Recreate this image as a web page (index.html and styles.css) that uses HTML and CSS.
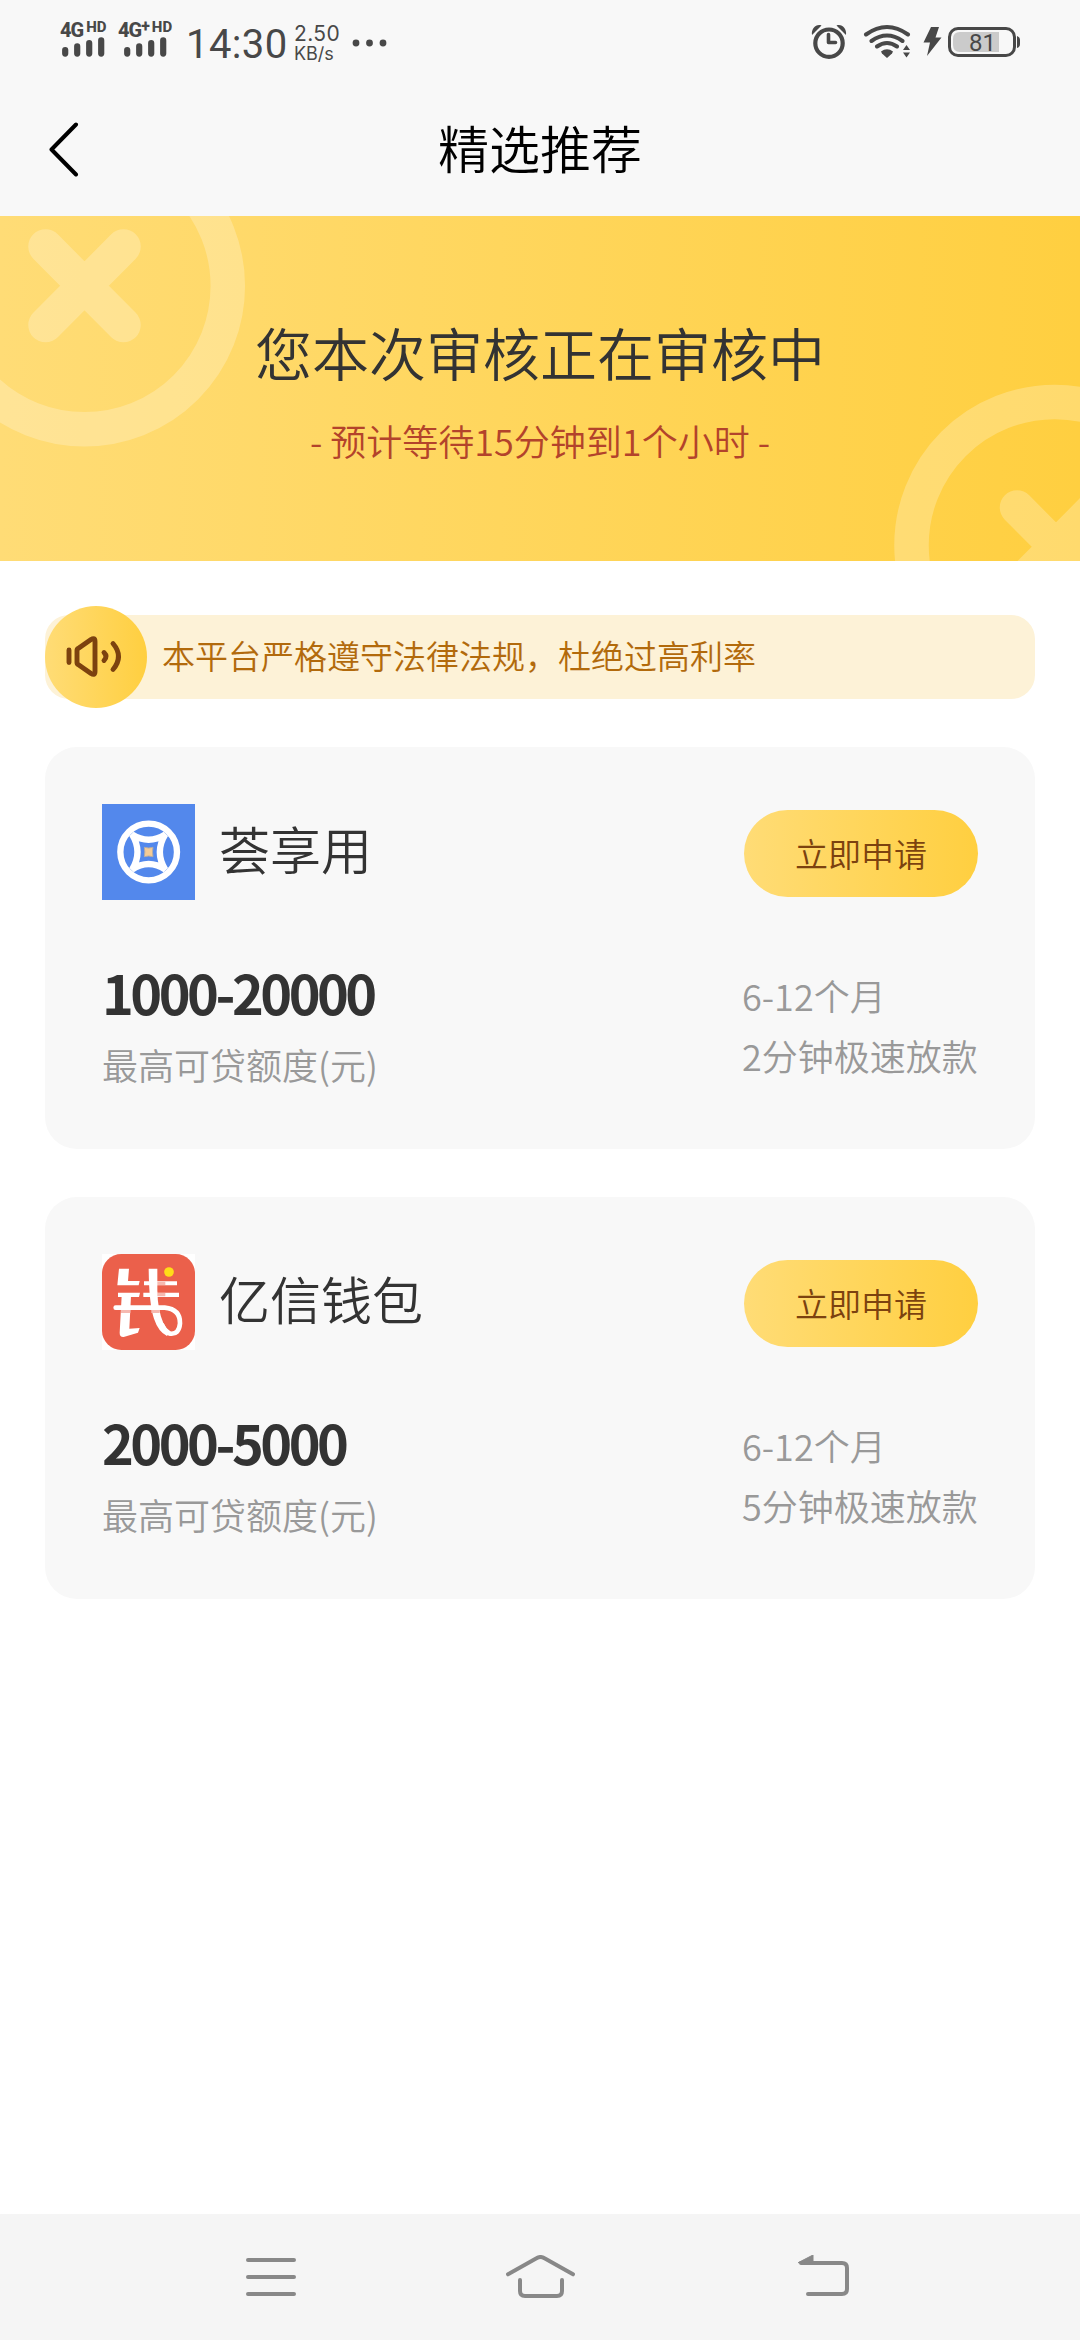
FILE: index.html
```html
<!DOCTYPE html>
<html lang="zh-CN">
<head>
<meta charset="utf-8">
<title>精选推荐</title>
<link rel="stylesheet" href="styles.css">
</head>
<body>
<div class="screen">
  <div class="status">
    <div class="sim">
      <div class="net">4G<small>HD</small></div>
      <svg width="43" height="20" viewBox="0 0 43 20" class="bars"><path d="M3.200 13v3.600M15.200 9.400v7.200M27.200 6.200v10.400M39.200 3.400v13.200"/></svg>
    </div>
    <div class="sim sim2">
      <div class="net">4G<sup>+</sup><small>HD</small></div>
      <svg width="43" height="20" viewBox="0 0 43 20" class="bars bars2"><path d="M3.200 13v3.600M15.200 9.400v7.200M27.200 6.200v10.400M39.200 3.400v13.200"/></svg>
    </div>
    <div class="clock">14:30</div>
    <div class="speed"><span>2.50</span><span class="unit">KB/s</span></div>
    <svg class="dots" width="36" height="8" viewBox="0 0 36 8"><circle cx="4" cy="4" r="3.400"/><circle cx="17.500" cy="4" r="3.400"/><circle cx="31" cy="4" r="3.400"/></svg>
    <svg class="sysicons" width="210" height="40" viewBox="810 22 210 40">
      <circle cx="829" cy="43.200" r="13.700" fill="none" stroke="#484848" stroke-width="4.200"/>
      <path d="M828.500 34.500v8h7" fill="none" stroke="#484848" stroke-width="3.600" stroke-linecap="round" stroke-linejoin="round"/>
      <path d="M812 35c-1-6 4-11.500 9.500-9.500zM846 35c1-6-4-11.500-9.500-9.500z" fill="#484848"/>
      <path d="M866 34.500Q887 19.500 908 34.500M871.500 41Q887 30 902.500 41M877 46.500Q887 39.500 897 46.500" fill="none" stroke="#484848" stroke-width="4" stroke-linecap="round"/>
      <path d="M881 51.500q6-4.500 12 0l-1 2-5 4.500-5-4.500z" fill="#484848"/>
      <path d="M906.500 45l3.500 5h-7zM903 52.500h7l-3.500 5z" fill="#484848"/>
      <path d="M931 27h8l-3.500 10.500h6L927 56l3-13.500h-6.500z" fill="#484848"/>
      <path d="M999 32h-39q-7 0-7 7v6q0 7 7 7h39z" fill="#cbcbcb"/>
      <rect x="949.500" y="28.500" width="65" height="27" rx="8.500" fill="none" stroke="#484848" stroke-width="3"/>
      <path d="M1017 36q3 1 3 4v4q0 3-3 4z" fill="#484848"/>
      <text x="982.500" y="51" class="charge">81</text>
    </svg>
  </div>

  <div class="titlebar">
    <svg class="back" width="34" height="56" viewBox="0 0 34 56"><path d="M31 3.500L6.500 28.500 31 53.500"/></svg>
    <h1>精选推荐</h1>
  </div>

  <section class="banner">
    <svg class="deco" width="1080" height="345" viewBox="0 216 1080 345">
      <g fill="none" stroke="#fff" stroke-opacity=".24" stroke-width="34.500" stroke-linecap="round">
        <circle cx="84.500" cy="286" r="143.300"/>
        <path d="M45.500 246.500l78 78.500M123.500 246.500l-78 78.500"/>
        <circle cx="1054.800" cy="545.300" r="143.300"/>
        <path d="M1017 507.500l78 78.500M1095 507.500l-78 78.500"/>
      </g>
    </svg>
    <h2>您本次审核正在审核中</h2>
    <p>- 预计等待15分钟到1个小时 -</p>
  </section>

  <div class="notice">
    <div class="horn">
      <svg width="102" height="102" viewBox="45 606 102 102"><path d="M69 650v12.500M77 650.500q0-1.500 1.500-2.200L91 639.500q4-2.500 4 2v30q0 4.500-4 2l-12.500-8.800q-1.500-.7-1.500-2.200zM104 652.500q4 4 0 8M113 643.500q11 13 0 26" fill="none" stroke="#7c420f" stroke-width="4.900" stroke-linecap="round" stroke-linejoin="round"/></svg>
    </div>
    <span>本平台严格遵守法律法规，杜绝过高利率</span>
  </div>

  <main class="list">
    <article class="card">
      <div class="head">
        <svg class="logo" width="93" height="96" viewBox="36 42 279 288">
          <path fill="#5388ec" d="M36 42h279v288H36z"/>
          <circle cx="176" cy="186" r="85" fill="none" stroke="#fff" stroke-width="19"/>
          <path d="M126 133q50 32 100 0-33 53 0 106-50-34-100 0 33-53 0-106z" fill="none" stroke="#fff" stroke-width="19"/>
          <path d="M163 172q13 4 26 0-3 14 0 28-13-4-26 0 3-14 0-28z" fill="#f4cb95" stroke="#b5aca5" stroke-width="3"/>
        </svg>
        <div class="name">荟享用</div>
        <button class="apply">立即申请</button>
      </div>
      <div class="body">
        <div class="quota"><strong>1000-20000</strong><span>最高可贷额度(元)</span></div>
        <div class="terms"><span>6-12个月</span><span>2分钟极速放款</span></div>
      </div>
    </article>

    <article class="card">
      <div class="head">
        <svg class="logo" width="93" height="96" viewBox="36 42 279 288">
          <path fill="#fff" d="M36 42h279v288H36z"/>
          <rect x="36" y="42" width="279" height="288" rx="58" fill="#eb604b"/>
          <g fill="#fff">
            <path d="M87 86h30l-3 37h35l-3 13H82zM84 158h66l-3 13H84z"/>
            <path d="M95 168h28l-5 98 31-2-5 14-43 13q-12 1-12-13z"/>
            <path d="M162 124h99v12h-99zM160 158h107v13H160z"/>
            <path d="M176 86h26v65q1 60 18 98 8 16 19 23l-8 16q-26-13-39-52-15-43-16-150z"/>
          </g>
          <path d="M77 203h147q47 5 46 47-3 34-29 31-16-4-25-26" fill="none" stroke="#fff" stroke-width="14" stroke-linecap="round"/>
          <path d="M202 125h24v10h-24zM202 159h24v10h-24zM93 210h28v9H93zM184 210h25v9h-25z" fill="#f6b9b0"/>
          <circle cx="237" cy="96" r="14.500" fill="#ffdc18"/>
        </svg>
        <div class="name">亿信钱包</div>
        <button class="apply">立即申请</button>
      </div>
      <div class="body">
        <div class="quota"><strong>2000-5000</strong><span>最高可贷额度(元)</span></div>
        <div class="terms"><span>6-12个月</span><span>5分钟极速放款</span></div>
      </div>
    </article>
  </main>

  <nav class="sysnav">
    <svg width="56" height="44" viewBox="243 2255 56 44"><path d="M248 2260h46M248 2277h46M248 2294h46"/></svg>
    <svg width="76" height="44" viewBox="503 2255 76 44"><path d="M508 2274.300l28.500-16q4-2.600 8 0l28.500 16M520 2280v11q0 5 5 5h32q5 0 5-5v-11"/></svg>
    <svg width="56" height="44" viewBox="796 2255 56 44"><path d="M801 2263h41q5 0 5 5v21q0 5-5 5h-34"/><path class="tip" d="M798.500 2262.500l14.500-7.500v8z"/></svg>
  </nav>
</div>
</body>
</html>
```
FILE: styles.css
```css
* { box-sizing: border-box; }
body {
  margin: 0;
  background: #fff;
  color: #333;
  font-family: "Noto Sans CJK SC", sans-serif;
  font-weight: 350;
}
svg { display: block; flex: none; }
h1, h2, p { margin: 0; font-weight: inherit; }
.screen {
  width: 1080px;
  height: 2340px;
  display: flex;
  flex-direction: column;
  overflow: hidden;
}

/* status bar */
.status {
  height: 84px;
  flex: none;
  display: flex;
  align-items: flex-start;
  background: #f8f8f8;
  color: #484848;
  font-family: Roboto, sans-serif;
  font-weight: 400;
  white-space: nowrap;
}
.sim { width: 58px; margin-left: 60px; padding-top: 20px; }
.sim2 { width: 70px; margin-left: 0; }
.net {
  display: flex;
  align-items: flex-start;
  height: 20px;
  font-size: 20px;
  line-height: 20px;
  font-weight: 800;
  letter-spacing: -1px;
}
.net small { font-size: 15px; line-height: 14px; margin-left: 3px; letter-spacing: 0; }
.net sup { font-size: 16px; line-height: 12px; }
.bars { margin: -3px 0 0 2px; }
.bars2 { margin-left: 6px; }
.bars path { stroke: #484848; stroke-width: 6.2; stroke-linecap: round; }
.clock { width: 106px; font-size: 40px; line-height: 48px; padding-top: 21px; margin-left: -2px; letter-spacing: .4px; }
.speed {
  width: 59px;
  padding-top: 22px;
  display: flex;
  flex-direction: column;
  font: 400 21px/23px Inter, sans-serif;
  letter-spacing: .4px;
  padding-left: 2px;
}
.speed .unit { font-size: 18px; line-height: 17px; letter-spacing: 0; }
.dots { margin: 39px 0 0 1px; fill: #484848; }
.sysicons { margin: 22px 60px 0 auto; }
.charge { font: 400 24px Roboto, sans-serif; fill: #484848; text-anchor: middle; }

/* title */
.titlebar {
  height: 132px;
  flex: none;
  display: grid;
  grid-template-columns: 1fr auto 1fr;
  align-items: center;
  padding: 0 45px 6px;
  background: #f8f8f8;
  color: #000;
}
.back { margin-top: 4px; }
.back path { fill: none; stroke: #000; stroke-width: 4; stroke-linecap: round; stroke-linejoin: round; }
.titlebar h1 { font-size: 51px; line-height: 60px; }

/* banner */
.banner {
  position: relative;
  height: 345px;
  flex: none;
  padding-top: 105px;
  text-align: center;
  background: linear-gradient(90deg, #ffdc76, #ffcf40);
}
.deco { position: absolute; left: 0; top: 0; }
.banner h2 { position: relative; font-size: 57px; line-height: 60px; }
.banner p { position: relative; margin-top: 39px; font-size: 36px; line-height: 40px; color: #b3432b; }

/* notice */
.notice {
  height: 84px;
  flex: none;
  margin: 54px 45px 48px;
  display: flex;
  align-items: center;
  gap: 15px;
  border-radius: 24px;
  background: #fdf2d7;
  color: #b26a0c;
  font-size: 33px;
  line-height: 40px;
}
.notice span { padding-bottom: 4px; }
.horn { width: 102px; height: 102px; flex: none; border-radius: 50%; background: linear-gradient(90deg, #ffdc76, #ffcf40); }

/* products */
.list { flex: 1; display: flex; flex-direction: column; gap: 48px; padding: 0 45px; }
.card { height: 402px; padding: 57px; border-radius: 32px; background: #f8f8f8; }
.head { display: flex; align-items: center; height: 96px; }
.name { flex: 1; padding: 0 0 8px 24px; font-size: 51px; line-height: 60px; }
.apply {
  width: 234px;
  height: 87px;
  margin: 3px 0 0;
  padding: 0 0 2px;
  border: 0;
  border-radius: 44px;
  background: linear-gradient(90deg, #ffdc76, #ffcf40);
  color: #7c420f;
  font: inherit;
  font-size: 33px;
}
.body { display: flex; justify-content: space-between; padding-top: 60px; }
.quota, .terms { display: flex; flex-direction: column; color: #999; font-size: 36px; white-space: nowrap; }
.quota { line-height: 44px; }
.quota strong { margin-bottom: 20px; padding-top: 2px; font-size: 54px; line-height: 60px; font-weight: 700; letter-spacing: -3.5px; color: #333; }
.terms { width: 236px; padding-top: 5px; line-height: 60px; }

/* system navigation */
.sysnav {
  height: 126px;
  flex: none;
  display: grid;
  grid-template-columns: 56px 1fr 56px;
  justify-items: center;
  padding: 41px 228px 0 243px;
  background: #f5f5f5;
}
.sysnav svg:nth-child(2) { margin-right: 13px; }
.sysnav path { fill: none; stroke: #888; stroke-width: 4; stroke-linecap: round; stroke-linejoin: round; }
.sysnav .tip { fill: #888; stroke-width: 1; }
```
